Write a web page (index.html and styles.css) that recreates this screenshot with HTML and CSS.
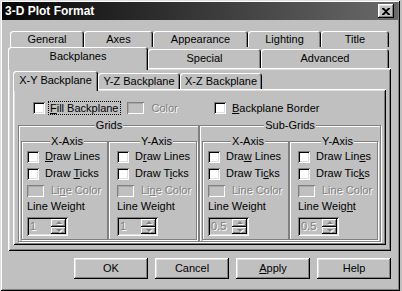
FILE: index.html
```html
<!DOCTYPE html>
<html lang="en">
<head>
    <meta charset="UTF-8">
    <meta name="viewport" content="width=device-width, initial-scale=1.0">
    <title>3-D Plot Format</title>
    <link rel="stylesheet" href="styles.css">
</head>
<body>

    <div class="window">
        <!-- Title bar -->
        <div class="titlebar">
            <span class="title">3-D Plot Format</span>
            <span class="close">
                <svg width="8" height="7" viewBox="0 0 8 7"><path d="M0 0h2l2 2 2-2h2v1L5 3.5 8 6v1H6L4 5 2 7H0V6l3-2.5L0 1z" fill="#000"/></svg>
            </span>
        </div>

        <div class="dialog-body">
            <!-- Main tabs, two rows -->
            <div class="tab-row row-back">
                <div class="tab">General</div>
                <div class="tab">Axes</div>
                <div class="tab">Appearance</div>
                <div class="tab">Lighting</div>
                <div class="tab">Title</div>
            </div>
            <div class="tab-row row-front">
                <div class="tab active">Backplanes</div>
                <div class="tab">Special</div>
                <div class="tab">Advanced</div>
            </div>

            <div class="panel outer-panel">
                <div class="tab-row row-inner">
                    <div class="tab active">X-Y Backplane</div>
                    <div class="tab">Y-Z Backplane</div>
                    <div class="tab">X-Z Backplane</div>
                </div>

                <div class="panel inner-panel">
                    <div class="top-options">
                        <div class="cell">
                            <span class="box"></span>
                            <span class="focus"><u>F</u>ill Backplane</span>
                            <span class="swatch swatch-top"></span>
                            <span class="disabled color-label">Color</span>
                        </div>
                        <div class="cell">
                            <span class="box"></span>
                            <span class="label"><u>B</u>ackplane Border</span>
                        </div>
                    </div>

                    <div class="groups">
                        <fieldset class="group grids">
                            <legend>Grids</legend>
                            <div class="axes">
                                <fieldset class="group axis">
                                    <legend>X-Axis</legend>
                                    <div class="row"><span class="box"></span><span class="label"><u>D</u>raw Lines</span></div>
                                    <div class="row"><span class="box"></span><span class="label">Draw <u>T</u>icks</span></div>
                                    <div class="row"><span class="swatch"></span><span class="label disabled">Li<u>n</u>e Color</span></div>
                                    <div class="weight">Line Weight</div>
                                    <div class="spin"><span>1</span><span class="spin-btns"><span class="spin-btn"><i class="up"></i></span><span class="spin-btn"><i class="down"></i></span></span></div>
                                </fieldset>
                                <fieldset class="group axis axis-y">
                                    <legend>Y-Axis</legend>
                                    <div class="row"><span class="box"></span><span class="label">D<u>r</u>aw Lines</span></div>
                                    <div class="row"><span class="box"></span><span class="label">Draw T<u>i</u>cks</span></div>
                                    <div class="row"><span class="swatch"></span><span class="label disabled">Li<u>n</u>e Color</span></div>
                                    <div class="weight">Line Weight</div>
                                    <div class="spin"><span>1</span><span class="spin-btns"><span class="spin-btn"><i class="up"></i></span><span class="spin-btn"><i class="down"></i></span></span></div>
                                </fieldset>
                            </div>
                        </fieldset>

                        <fieldset class="group subgrids">
                            <legend>Sub-Grids</legend>
                            <div class="axes">
                                <fieldset class="group axis">
                                    <legend>X-Axis</legend>
                                    <div class="row"><span class="box"></span><span class="label">Dra<u>w</u> Lines</span></div>
                                    <div class="row"><span class="box"></span><span class="label">Draw Ti<u>c</u>ks</span></div>
                                    <div class="row"><span class="swatch"></span><span class="label disabled">Line Color</span></div>
                                    <div class="weight">Line Wei<u>g</u>ht</div>
                                    <div class="spin"><span>0.5</span><span class="spin-btns"><span class="spin-btn"><i class="up"></i></span><span class="spin-btn"><i class="down"></i></span></span></div>
                                </fieldset>
                                <fieldset class="group axis axis-y">
                                    <legend>Y-Axis</legend>
                                    <div class="row"><span class="box"></span><span class="label">Draw Lin<u>e</u>s</span></div>
                                    <div class="row"><span class="box"></span><span class="label">Draw Tic<u>k</u>s</span></div>
                                    <div class="row"><span class="swatch"></span><span class="label disabled">Line Color</span></div>
                                    <div class="weight">Line Weig<u>h</u>t</div>
                                    <div class="spin"><span>0.5</span><span class="spin-btns"><span class="spin-btn"><i class="up"></i></span><span class="spin-btn"><i class="down"></i></span></span></div>
                                </fieldset>
                            </div>
                        </fieldset>
                    </div>
                </div>
            </div>

            <!-- Dialog buttons -->
            <div class="actions">
                <div class="btn">OK</div>
                <div class="btn">Cancel</div>
                <div class="btn"><u>A</u>pply</div>
                <div class="btn">Help</div>
            </div>
        </div>
    </div>

</body>
</html>
```

FILE: styles.css
```css
* {
    box-sizing: border-box;
}

body {
    margin: 0;
    background: #c0c0c0;
    font-family: "Liberation Sans", Arial, sans-serif;
    font-size: 11px;
    line-height: 13px;
    color: #000;
}

u {
    text-decoration: underline;
    text-underline-offset: 1px;
}

.window {
    width: 400px;
    height: 291px;
    padding: 2px;
    display: flex;
    flex-direction: column;
    background: #c0c0c0;
    box-shadow: inset 1px 1px #dfdfdf, inset -1px -1px #000, inset 2px 2px #fff, inset -2px -2px #808080;
}

/* Title bar */
.titlebar {
    height: 18px;
    display: flex;
    align-items: center;
    padding: 0 4px 0 3px;
    background: linear-gradient(to right, #060606, #6a6a6a);
    color: #fff;
    font-size: 12px;
    font-weight: bold;
}

.title {
    flex: 1;
}

.close {
    width: 16px;
    height: 14px;
    display: flex;
    align-items: center;
    justify-content: center;
    background: #c0c0c0;
    box-shadow: inset -1px -1px #000, inset 1px 1px #fff, inset -2px -2px #808080, inset 2px 2px #dfdfdf;
}

.dialog-body {
    flex: 1;
    display: flex;
    flex-direction: column;
    padding: 11px 7px 0 6px;
}

/* Tabs */
.tab-row {
    display: grid;
    align-items: end;
}

.row-back {
    height: 16px;
    margin: 0 2px;
    grid-template-columns: 74px 69px 95px 73px 68px;
}

.row-front {
    height: 21px;
    grid-template-columns: 140px 113px 128px;
}

.row-inner {
    height: 18px;
    grid-template-columns: 85px 82px 82px;
}

.tab {
    display: flex;
    align-items: center;
    justify-content: center;
    background: #c0c0c0;
    border-radius: 3px 3px 0 0;
    box-shadow: inset 1px 1px #fff, inset -1px 0 #000, inset -2px 0 #808080;
}

.row-back .tab {
    height: 16px;
}

.row-front .tab {
    height: 19px;
}

.row-inner .tab {
    height: 16px;
}

.tab.active {
    position: relative;
    z-index: 1;
    margin-bottom: -2px;
}

.row-front .tab.active {
    height: 23px;
    padding-bottom: 4px;
}

.row-inner .tab.active {
    height: 20px;
    padding-bottom: 2px;
}

/* Panels */
.panel {
    background: #c0c0c0;
    box-shadow: inset 1px 1px #fff, inset -1px -1px #000, inset 2px 2px #dfdfdf, inset -2px -2px #808080;
}

.outer-panel {
    height: 183px;
    display: flex;
    flex-direction: column;
    padding: 3px 5px 6px 5px;
}

.inner-panel {
    flex: 1;
    padding: 12px 0 0 5px;
}

.top-options {
    display: grid;
    grid-template-columns: 181px 182px;
    height: 14px;
}

.cell {
    display: flex;
    align-items: center;
    padding-left: 15px;
}

.cell .label {
    margin-left: 6px;
}

.focus {
    margin-left: 3px;
    padding: 0 1px;
    border: 1px dotted #000;
    line-height: 12px;
}

.swatch-top {
    margin-left: 6px;
}

.color-label {
    margin-left: 8px;
}

/* Check boxes, swatches */
.box {
    flex: none;
    width: 12px;
    height: 12px;
    background: #fff;
    box-shadow: inset 1px 1px #808080, inset -1px -1px #fff, inset 2px 2px #000, inset -2px -2px #dfdfdf;
}

.swatch {
    flex: none;
    width: 17px;
    height: 12px;
    background: #c0c0c0;
    box-shadow: inset 1px 1px #808080, inset -1px -1px #fff, inset 2px 2px #a8a8a8;
}

.disabled {
    color: #808080;
    text-shadow: 1px 1px #fff;
}

/* Group boxes */
.groups {
    display: grid;
    grid-template-columns: 181px 182px;
    margin-top: 4px;
}

.group {
    margin: 0;
    min-width: 0;
    border: 1px solid #808080;
    box-shadow: inset 1px 1px #fff, 1px 1px #fff;
}

.group legend {
    margin: 0 auto;
    padding: 0 1px;
    line-height: 13px;
    background: #c0c0c0;
}

.grids {
    padding: 3px 1px 1px 2px;
}

.subgrids {
    padding: 3px 2px 1px 2px;
}

.axes {
    display: grid;
    grid-template-columns: 87px 89px;
}

.axis {
    padding: 0 0 3px 5px;
}

.axis-y {
    padding-left: 8px;
}

.row {
    height: 17px;
    display: flex;
    align-items: center;
}

.row .label {
    margin-left: 6px;
}

.row .label.disabled {
    margin-left: 7px;
}

.weight {
    height: 14px;
    line-height: 14px;
}

.spin {
    width: 41px;
    height: 19px;
    margin-top: 4px;
    display: flex;
    align-items: center;
    justify-content: space-between;
    padding: 2px 2px 2px 3px;
    color: #808080;
    text-shadow: 1px 1px #fff;
    box-shadow: inset 1px 1px #808080, inset -1px -1px #fff, inset 2px 2px #000, inset -2px -2px #dfdfdf;
}

.spin-btns {
    width: 15px;
    height: 15px;
    display: flex;
    flex-direction: column;
}

.spin-btn {
    flex: 1;
    display: flex;
    align-items: center;
    justify-content: center;
    box-shadow: inset -1px -1px #000, inset 1px 1px #fff, inset -2px -2px #808080;
}

.up,
.down {
    width: 0;
    height: 0;
    border-left: 3px solid transparent;
    border-right: 3px solid transparent;
    filter: drop-shadow(1px 1px 0 #fff);
}

.up {
    border-bottom: 3px solid #808080;
}

.down {
    border-top: 3px solid #808080;
}

/* Dialog buttons */
.actions {
    display: flex;
    justify-content: flex-end;
    gap: 7px;
    margin-top: 7px;
}

.btn {
    width: 74px;
    height: 21px;
    display: flex;
    align-items: center;
    justify-content: center;
    box-shadow: inset -1px -1px #000, inset 1px 1px #fff, inset -2px -2px #808080, inset 2px 2px #dfdfdf;
}
```
